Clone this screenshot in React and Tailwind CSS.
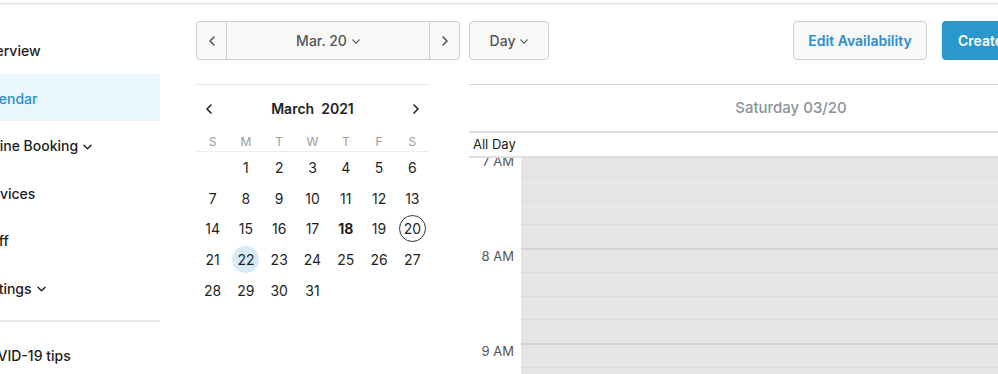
import React from "react";

const font = { fontFamily: "Inter, 'Open Sans', sans-serif" };

function ChevDown({ className = "" }) {
  return (
    <svg viewBox="0 0 10 6" className={className} fill="none" stroke="currentColor" strokeWidth="1.5" strokeLinecap="round" strokeLinejoin="round">
      <path d="M1 1l4 4 4-4" />
    </svg>
  );
}
function ChevLeft({ className = "" }) {
  return (
    <svg viewBox="0 0 6 10" className={className} fill="none" stroke="currentColor" strokeWidth="1.6" strokeLinecap="round" strokeLinejoin="round">
      <path d="M5 1L1 5l4 4" />
    </svg>
  );
}
function ChevRight({ className = "" }) {
  return (
    <svg viewBox="0 0 6 10" className={className} fill="none" stroke="currentColor" strokeWidth="1.6" strokeLinecap="round" strokeLinejoin="round">
      <path d="M1 1l4 4-4 4" />
    </svg>
  );
}

const navItems = [
  { label: "Overview" },
  { label: "Calendar", active: true },
  { label: "Online Booking", chev: true },
  { label: "Services" },
  { label: "Staff" },
  { label: "Settings", chev: true },
];

function Sidebar() {
  return (
    <div className="w-[160px] shrink-0 overflow-hidden pt-[22px]">
      {navItems.map((it) => (
        <div
          key={it.label}
          className={`h-[47.5px] flex items-center ${it.active ? "bg-[#e9f6fe] text-[#2a8fca]" : "text-[#1d1d1d]"}`}
        >
          <span className="ml-[-23px] mt-[2px] text-[14px] font-medium whitespace-nowrap flex items-center">
            {it.label}
            {it.chev && <ChevDown className="w-[9px] h-[6px] ml-[5px] mt-[2px]" />}
          </span>
        </div>
      ))}
      <div className="mt-[9px] h-[2px] bg-[#e6e6e6]" />
      <div className="mt-[10px] h-[47.5px] flex items-center text-[#1d1d1d]">
        <span className="ml-[-23px] text-[14px] font-medium whitespace-nowrap">COVID-19 tips</span>
      </div>
    </div>
  );
}

const weeks = [
  [null, 1, 2, 3, 4, 5, 6],
  [7, 8, 9, 10, 11, 12, 13],
  [14, 15, 16, 17, 18, 19, 20],
  [21, 22, 23, 24, 25, 26, 27],
  [28, 29, 30, 31, null, null, null],
];

function MiniCalendar() {
  return (
    <div className="w-[233px] shrink-0 border-t border-[#e8e8e8]">
      <div className="h-[47px] flex items-center justify-between px-[10px] text-[#222]">
        <ChevLeft className="w-[6px] h-[10px]" />
        <span className="text-[14px] font-semibold">March&nbsp; 2021</span>
        <ChevRight className="w-[6px] h-[10px]" />
      </div>
      <div className="grid grid-cols-7 h-[20px] items-center border-b border-[#ececec] text-[12px] text-[#9a9a9a]">
        {["S", "M", "T", "W", "T", "F", "S"].map((d, i) => (
          <div key={i} className="text-center">{d}</div>
        ))}
      </div>
      {weeks.map((w, wi) => (
        <div key={wi} className="grid grid-cols-7 h-[30.7px]">
          {w.map((d, di) => (
            <div key={di} className="flex items-center justify-center">
              {d && (
                <span
                  className={`w-[27px] h-[27px] rounded-full flex items-center justify-center text-[14px] text-[#1f1f1f] ${
                    d === 20 ? "border border-[#333]" : ""
                  } ${d === 22 ? "bg-[#d6ebf6]" : ""} ${d === 18 ? "font-bold" : ""}`}
                >
                  {d}
                </span>
              )}
            </div>
          ))}
        </div>
      ))}
    </div>
  );
}

function DayView() {
  const hours = ["7 AM", "8 AM", "9 AM"];
  return (
    <div className="flex-1 min-w-0 overflow-hidden border-t border-[#d4d4d4] flex flex-col">
      <div className="w-[592px]">
        <div className="h-[48px] flex items-center border-b-2 border-[#dedede]">
          <div className="w-[52px] shrink-0" />
          <div className="w-[540px] text-center text-[15px] font-medium text-[#8b939b]">Saturday 03/20</div>
        </div>
        <div className="h-[25px] flex items-center border-b-2 border-[#dedede] pl-[4px] text-[13px] text-[#222]">
          All Day
        </div>
      </div>
      <div className="flex-1 overflow-hidden">
        <div className="mt-[-5px] flex">
          <div className="w-[52px] shrink-0">
            {hours.map((h) => (
              <div key={h} className="h-[95px] pr-[7px] pt-[1px] text-right text-[13px] leading-[14px] text-[#555]">
                {h}
              </div>
            ))}
          </div>
          <div className="flex-1 bg-[#e6e6e6]">
            {hours.map((h) => (
              <div key={h}>
                <div className="h-[23.75px] border-t-2 border-[#d3d3d3]" />
                <div className="h-[23.75px] border-t border-[#dcdcdc]" />
                <div className="h-[23.75px] border-t border-[#dcdcdc]" />
                <div className="h-[23.75px] border-t border-[#dcdcdc]" />
              </div>
            ))}
          </div>
        </div>
      </div>
    </div>
  );
}

export default function App() {
  return (
    <div className="w-[998px] h-[374px] overflow-hidden bg-white flex flex-col" style={font}>
      <div className="h-[4px] shrink-0 border-b border-[#e3e3e3] shadow-[0_1px_2px_rgba(0,0,0,0.06)]" />
      <div className="flex flex-1 min-h-0">
        <Sidebar />
        <div className="ml-[36px] flex-1 min-w-0 flex flex-col">
          <div className="mt-[17px] h-[39px] flex items-stretch shrink-0">
            <div className="w-[264px] flex rounded-[4px] border border-[#cfcfcf] bg-[#f8f8f8] text-[#555]">
              <div className="w-[30px] flex items-center justify-center border-r border-[#cfcfcf]">
                <ChevLeft className="w-[6px] h-[10px]" />
              </div>
              <div className="flex-1 flex items-center justify-center text-[14px] font-medium">
                Mar. 20
                <ChevDown className="w-[8px] h-[5px] ml-[5px] mt-[1px]" />
              </div>
              <div className="w-[30px] flex items-center justify-center border-l border-[#cfcfcf]">
                <ChevRight className="w-[6px] h-[10px]" />
              </div>
            </div>
            <div className="ml-[9px] w-[80px] flex items-center justify-center rounded-[4px] border border-[#cfcfcf] bg-[#f8f8f8] text-[14px] font-medium text-[#555]">
              Day
              <ChevDown className="w-[8px] h-[5px] ml-[5px] mt-[1px]" />
            </div>
            <div className="flex-1" />
            <div className="w-[134px] shrink-0 flex items-center justify-center rounded-[4px] border border-[#cfcfcf] bg-[#f8f8f8] text-[14px] font-semibold text-[#2a8fca]">
              Edit Availability
            </div>
            <div className="ml-[15px] w-[110px] shrink-0 mr-[-54px] flex items-center pl-[16px] rounded-[4px] bg-[#2a97cd] text-[14px] font-semibold text-white">
              Create
            </div>
          </div>
          <div className="mt-[24px] flex flex-1 min-h-0">
            <MiniCalendar />
            <div className="w-[40px] shrink-0" />
            <DayView />
          </div>
        </div>
      </div>
    </div>
  );
}
